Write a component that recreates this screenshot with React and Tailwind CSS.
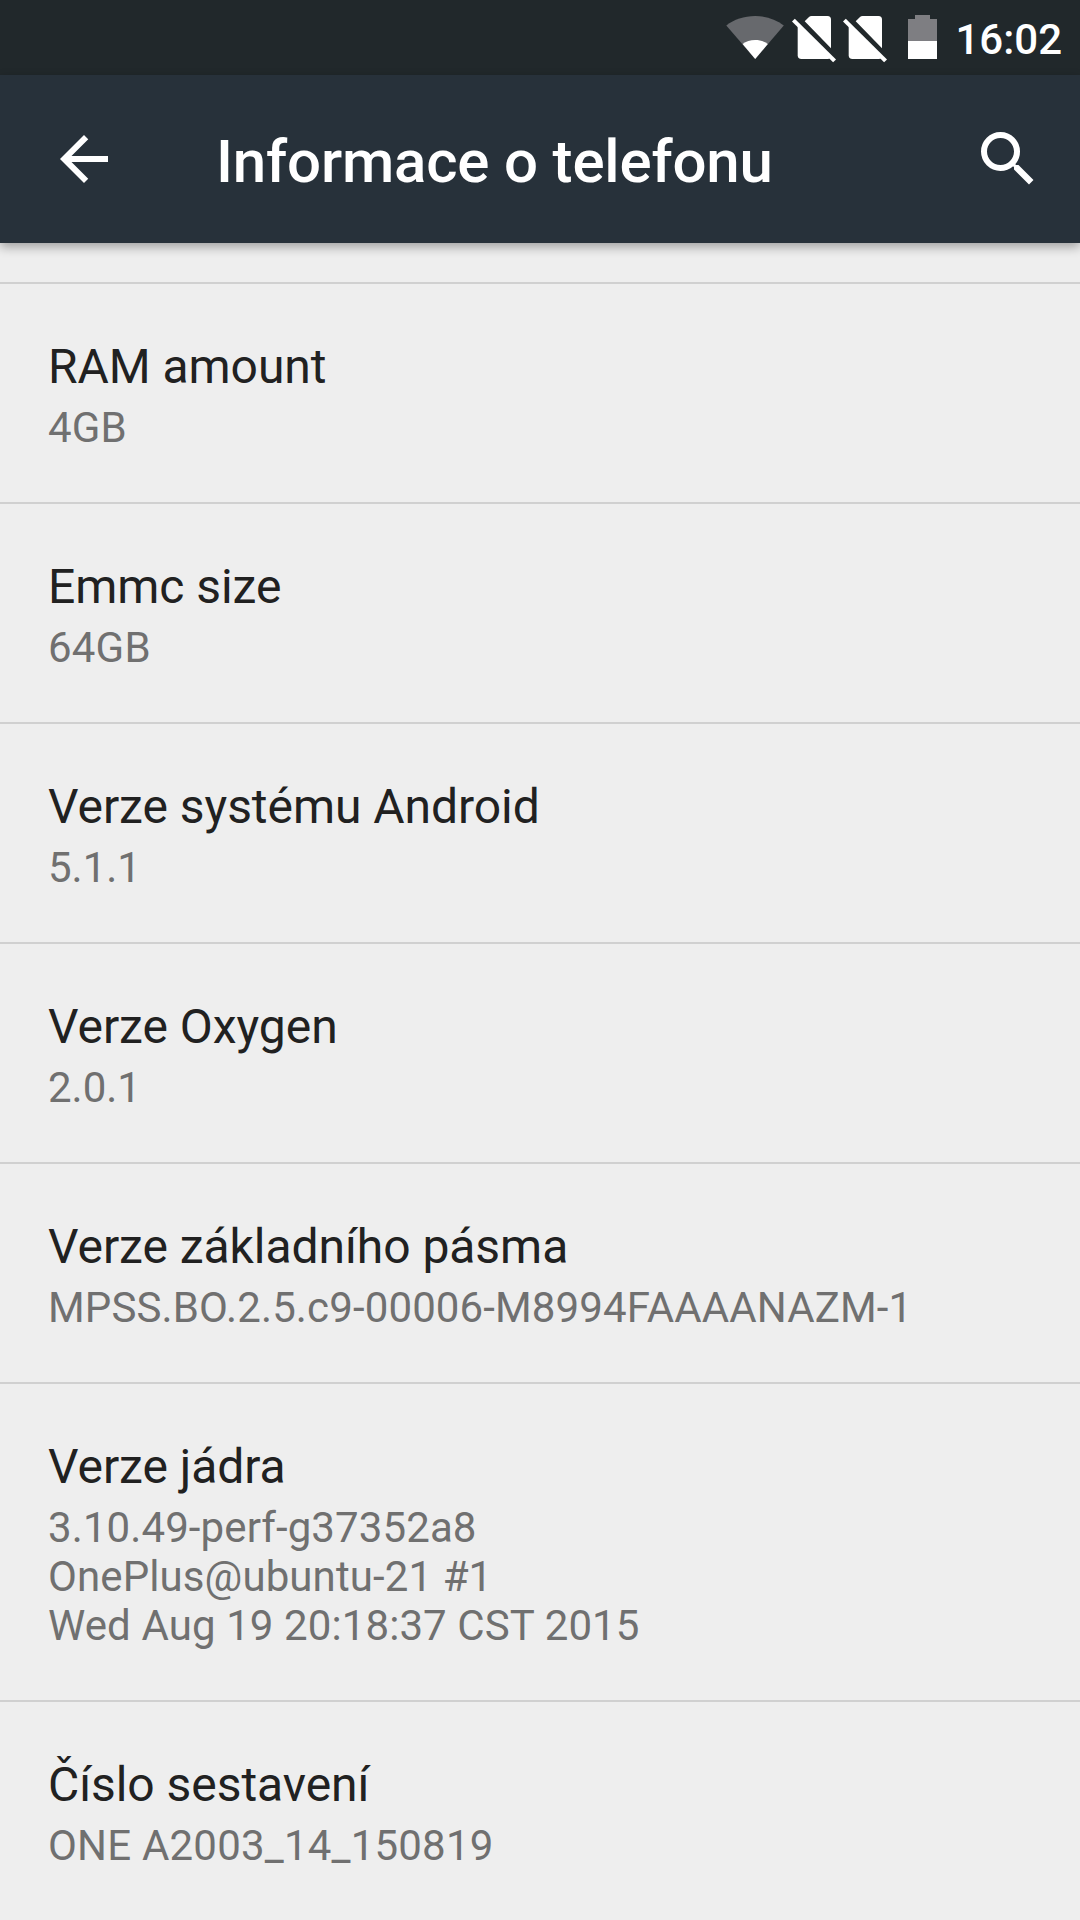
import React from "react";
import { MdArrowBack, MdSearch } from "react-icons/md";

const infoList = [
  { title: "RAM amount", lines: ["4GB"], tracking: "tracking-[0.2px]" },
  { title: "Emmc size", lines: ["64GB"], tracking: "tracking-[0.2px]" },
  { title: "Verze systému Android", lines: ["5.1.1"] },
  { title: "Verze Oxygen", lines: ["2.0.1"] },
  {
    title: "Verze základního pásma",
    lines: ["MPSS.BO.2.5.c9-00006-M8994FAAAANAZM-1"],
    tracking: "tracking-[0.13px]",
  },
  {
    title: "Verze jádra",
    lines: [
      "3.10.49-perf-g37352a8",
      "OnePlus@ubuntu-21 #1",
      "Wed Aug 19 20:18:37 CST 2015",
    ],
    tracking: "tracking-[0.1px]",
  },
  {
    title: "Číslo sestavení",
    lines: ["ONE A2003_14_150819"],
    tracking: "tracking-[0.2px]",
  },
];

function WifiIcon() {
  return (
    <svg width="58" height="75" viewBox="0 0 58 75">
      <path d="M0.3 25.5C8 19.5 18 16 29.2 16S50 19.5 57.8 25.5L29.2 59z" fill="#67696d" />
      <path d="M16.6 44C20 41.5 24.3 40 29.2 40S38.4 41.5 41.8 44L29.2 59z" fill="#fff" />
    </svg>
  );
}

function NoSimIcon() {
  return (
    <svg width="45" height="75" viewBox="0 0 45 75" fill="#fff">
      <path d="M12.7 21.3L17 17Q18 16 19.5 16H35.5Q39 16 39 19.5V48.2z" />
      <path d="M5.7 25.5L38.3 58.1Q37.3 59 35.8 59H9.5Q5.7 59 5.7 55.2z" />
      <path d="M0 21.6L2.8 18.8L44 59.4L41.1 62.3z" />
    </svg>
  );
}

function BatteryIcon() {
  return (
    <svg width="29" height="75" viewBox="0 0 29 75">
      <path d="M7 15H22V19H29V41H0V19H7z" fill="#7e7e82" />
      <path d="M0 41H29V59H0z" fill="#fff" />
    </svg>
  );
}

export default function App() {
  return (
    <div className="w-[1080px] h-[1920px] overflow-hidden flex flex-col bg-[#eeeeee] font-[Roboto,sans-serif]">
      {/* status bar */}
      <div className="h-[75px] shrink-0 flex justify-end pr-[18px] bg-[#21282b] text-white">
        <WifiIcon />
        <div className="flex gap-1.5 ml-2">
          <NoSimIcon />
          <NoSimIcon />
        </div>
        <div className="ml-5">
          <BatteryIcon />
        </div>
        <span className="ml-[18px] pt-[15px] text-[42px] leading-[49px] font-medium">
          16:02
        </span>
      </div>

      {/* header */}
      <header className="h-[168px] shrink-0 flex items-center pl-12 pr-9 bg-[#27313a] text-white shadow-[0_4px_10px_rgba(0,0,0,0.33)]">
        <button>
          <MdArrowBack className="size-[72px]" />
        </button>
        <h1 className="ml-24 pt-1.5 flex-1 text-[60px] leading-[70px] font-medium tracking-[-0.18px]">
          Informace o telefonu
        </h1>
        <button>
          <MdSearch className="size-[72px]" />
        </button>
      </header>

      {/* list */}
      <ul className="pt-[39px]">
        {infoList.map((item) => (
          <li
            key={item.title}
            className="border-t-2 border-[#d0d0d0] px-12 pt-[55px] pb-[50px]"
          >
            <p className="text-[48px] leading-[56px] tracking-[-0.05px] text-[#212121]">
              {item.title}
            </p>
            <div
              className={`mt-2 text-[42px] leading-[49px] text-[#707070] ${item.tracking || ""}`}
            >
              {item.lines.map((line) => (
                <p key={line}>{line}</p>
              ))}
            </div>
          </li>
        ))}
      </ul>
    </div>
  );
}
